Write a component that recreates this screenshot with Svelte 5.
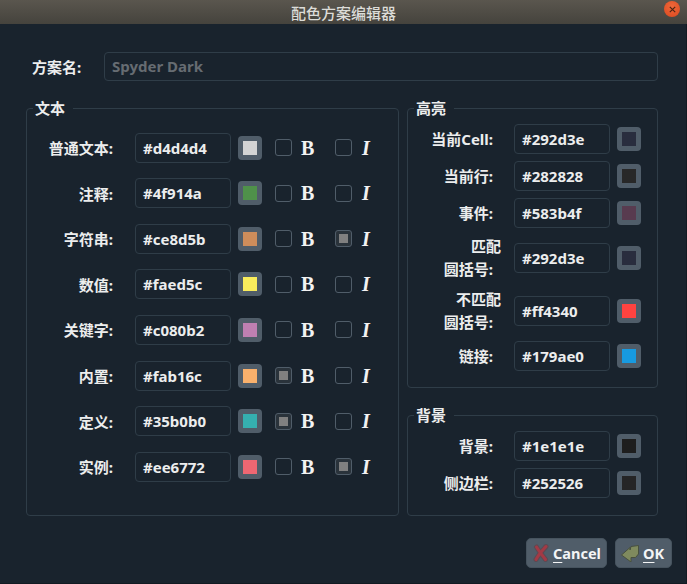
<script lang="ts">
  const fonts = [
    { label: "普通文本:", hex: "#d4d4d4", bold: false, italic: false },
    { label: "注释:", hex: "#4f914a", bold: false, italic: false },
    { label: "字符串:", hex: "#ce8d5b", bold: false, italic: true },
    { label: "数值:", hex: "#faed5c", bold: false, italic: false },
    { label: "关键字:", hex: "#c080b2", bold: false, italic: false },
    { label: "内置:", hex: "#fab16c", bold: true, italic: false },
    { label: "定义:", hex: "#35b0b0", bold: true, italic: false },
    { label: "实例:", hex: "#ee6772", bold: false, italic: true },
  ];
  const highlight = [
    { lines: ["当前Cell:"], hex: "#292d3e" },
    { lines: ["当前行:"], hex: "#282828" },
    { lines: ["事件:"], hex: "#583b4f" },
    { lines: ["匹配", "圆括号:"], hex: "#292d3e" },
    { lines: ["不匹配", "圆括号:"], hex: "#ff4340" },
    { lines: ["链接:"], hex: "#179ae0" },
  ];
  const background = [
    { lines: ["背景:"], hex: "#1e1e1e" },
    { lines: ["侧边栏:"], hex: "#252526" },
  ];
</script>

{#snippet colorRow(hex: string)}
  <span class="hex">{hex}</span>
  <span class="swatch"><span class="fill" style="background:{hex}"></span></span>
{/snippet}

{#snippet sideRow(row: { lines: string[]; hex: string })}
  <div class="side-row" class:tall={row.lines.length > 1}>
    <div class="side-label">
      {#each row.lines as line, i}
        <span class:colon={i === row.lines.length - 1}>{line}</span>
      {/each}
    </div>
    {@render colorRow(row.hex)}
  </div>
{/snippet}

<div class="dialog">
  <header class="titlebar">
    <span class="title">配色方案编辑器</span>
    <span class="close">
      <svg viewBox="0 0 10 10" width="9" height="9">
        <path d="M2 2l6 6M8 2l-6 6" stroke="#4a2413" stroke-width="1.3" fill="none" />
      </svg>
    </span>
  </header>

  <main class="body">
    <div class="name-row">
      <span class="name-label">方案名:</span>
      <span class="name-input">Spyder Dark</span>
    </div>

    <div class="columns">
      <fieldset class="group text-group">
        <legend>文本</legend>
        {#each fonts as f (f.label)}
          <div class="font-row">
            <span class="font-label">{f.label}</span>
            {@render colorRow(f.hex)}
            <span class="check" class:on={f.bold}></span>
            <b class="glyph bold">B</b>
            <span class="check second" class:on={f.italic}></span>
            <i class="glyph italic">I</i>
          </div>
        {/each}
      </fieldset>

      <div class="side">
        <fieldset class="group hl-group">
          <legend>高亮</legend>
          {#each highlight as row (row.lines.join())}
            {@render sideRow(row)}
          {/each}
        </fieldset>
        <fieldset class="group bg-group">
          <legend>背景</legend>
          {#each background as row (row.hex)}
            {@render sideRow(row)}
          {/each}
        </fieldset>
      </div>
    </div>

    <div class="buttons">
      <span class="btn cancel">
        <svg viewBox="0 0 16 18" width="16" height="18">
          <path d="M3.500 3C6 7 9 11 12.500 15.500M13 2.500C10 6 6 10 3 15.500" stroke="#5c4a53" stroke-width="5" fill="none" stroke-linecap="round" />
          <path d="M3.500 3C6 7 9 11 12.500 15.500M13 2.500C10 6 6 10 3 15.500" stroke="#a23a45" stroke-width="3" fill="none" stroke-linecap="round" />
        </svg>
        <span><u>C</u>ancel</span>
      </span>
      <span class="btn ok">
        <svg viewBox="0 0 18 18" width="18" height="18">
          <path
            d="M.5 11L9 3.500V6l1-3.500 7.500-1V10l-3 3.500H10V18z"
            fill="#7f8a5e"
            stroke="#48503f"
            stroke-width="1"
            stroke-linejoin="round"
          />
        </svg>
        <span><u>O</u>K</span>
      </span>
    </div>
  </main>
</div>

<style>
  :global(body) {
    margin: 0;
    background: #19232d;
    overflow: hidden;
  }
  .dialog {
    width: 687px;
    height: 584px;
    display: flex;
    flex-direction: column;
    background: #19232d;
    color: #eceded;
    font-family: "Noto Sans", "Noto Sans CJK SC", sans-serif;
    font-size: 15px;
    font-weight: 700;
  }
  .titlebar {
    height: 24px;
    flex: none;
    display: flex;
    align-items: center;
    justify-content: center;
    background: linear-gradient(#5a564e, #45433d);
    position: relative;
  }
  .title {
    font-weight: 500;
    font-size: 15px;
    color: #dcdcd8;
  }
  .close {
    position: absolute;
    left: 664px;
    top: 1px;
    width: 16px;
    height: 16px;
    border-radius: 50%;
    background: radial-gradient(circle at 50% 35%, #f0683a, #d9481f);
    display: flex;
    align-items: center;
    justify-content: center;
  }
  .body {
    flex: 1;
    display: flex;
    flex-direction: column;
    padding: 28px 28px 15px 26px;
    border-right: 1px solid #121a22;
    border-bottom: 2px solid #121a22;
  }
  .name-row {
    display: flex;
    align-items: center;
    height: 29px;
    padding-left: 6px;
  }
  .name-label {
    width: 72px;
  }
  .name-input {
    flex: 1;
    height: 27px;
    line-height: 27px;
    padding-left: 7px;
    border: 1px solid #2f3d48;
    border-radius: 4px;
    color: #666c72;
  }
  .columns {
    display: flex;
    gap: 8px;
    margin-top: 17px;
  }
  .group {
    margin: 0;
    padding: 0;
    min-width: 0;
    box-sizing: border-box;
    border: 1px solid #2f3d48;
    border-radius: 4px;
  }
  legend {
    margin-left: 6px;
    padding: 0 8px 0 2px;
    line-height: 20px;
  }
  .text-group {
    width: 373px;
    height: 418px;
    padding: 14.6px 0 0;
    display: flex;
    flex-direction: column;
    gap: 15.6px;
  }
  .font-row {
    display: flex;
    align-items: center;
    height: 30px;
  }
  .font-label {
    width: 108px;
    padding-right: 22px;
    box-sizing: border-box;
    text-align: right;
  }
  .hex {
    width: 96px;
    height: 30px;
    box-sizing: border-box;
    flex: none;
    line-height: 28px;
    padding-left: 7px;
    border: 1px solid #2f3d48;
    border-radius: 4px;
  }
  .swatch {
    width: 24px;
    height: 24px;
    margin-left: 7px;
    flex: none;
    border-radius: 4px;
    background: #505d69;
    display: flex;
    align-items: center;
    justify-content: center;
  }
  .fill {
    width: 14px;
    height: 14px;
    box-sizing: border-box;
  }
  .check {
    width: 17px;
    height: 17px;
    margin-left: 13px;
    flex: none;
    box-sizing: border-box;
    border: 1px solid #505d69;
    border-radius: 3px;
    display: flex;
    align-items: center;
    justify-content: center;
  }
  .check.on {
    background: #2a333b;
  }
  .check.on::after {
    content: "";
    width: 9px;
    height: 9px;
    background: #808080;
  }
  .check.second {
    margin-left: 0;
  }
  .glyph {
    font-family: "Liberation Serif", serif;
    font-size: 20px;
    color: #f2f2f2;
    flex: none;
    line-height: 1;
  }
  .bold {
    width: 43px;
    padding-left: 9px;
    box-sizing: border-box;
  }
  .italic {
    margin-left: 10px;
  }
  .side {
    display: flex;
    flex-direction: column;
    width: 251px;
    gap: 17px;
  }
  .hl-group {
    height: 290px;
    padding: 6px 0 0;
    display: flex;
    flex-direction: column;
    gap: 7px;
  }
  .bg-group {
    height: 111px;
    padding: 6px 0 0;
    display: flex;
    flex-direction: column;
    gap: 7px;
  }
  .side-row {
    display: flex;
    align-items: center;
    height: 30px;
  }
  .side-row.tall {
    height: 46px;
  }
  .side-label {
    width: 93px;
    margin-right: 13px;
    text-align: right;
    display: flex;
    flex-direction: column;
    line-height: 23px;
    flex: none;
  }
  .colon {
    padding-right: 8px;
  }
  .buttons {
    display: flex;
    justify-content: flex-end;
    gap: 8px;
    margin-top: 22px;
    margin-right: -14px;
  }
  .btn {
    height: 30px;
    box-sizing: border-box;
    display: flex;
    align-items: center;
    gap: 4px;
    border-radius: 5px;
    background: #505d69;
    border: 1px solid #46535e;
    color: #f4f5f6;
    font-size: 14.5px;
  }
  u {
    text-underline-offset: 3px;
    text-decoration-thickness: 1px;
  }
  .cancel {
    width: 81px;
    padding-left: 6px;
  }
  .ok {
    width: 57px;
    padding-left: 5px;
  }
</style>
